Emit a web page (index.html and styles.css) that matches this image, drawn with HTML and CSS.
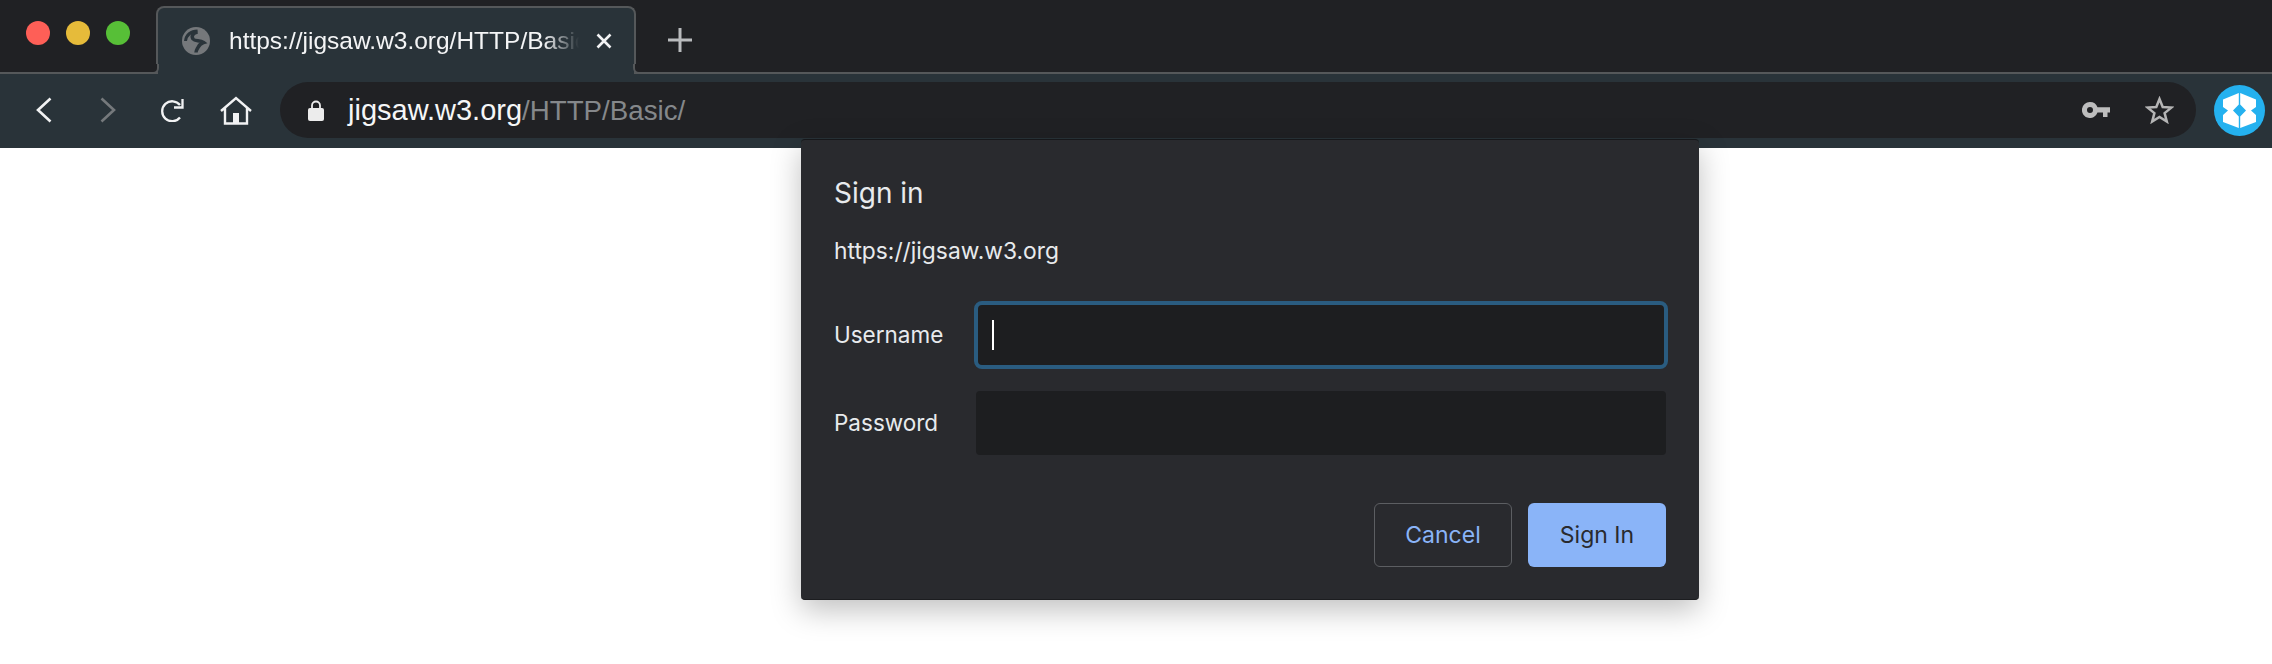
FILE: index.html
```html
<!DOCTYPE html>
<html lang="en">
<head>
    <meta charset="UTF-8">
    <meta name="viewport" content="width=device-width, initial-scale=1.0">
    <title>Sign in</title>
    <link rel="stylesheet" href="styles.css">
</head>
<body>

    <div class="tab-strip">
        <div class="traffic-lights">
            <span class="light red"></span>
            <span class="light yellow"></span>
            <span class="light green"></span>
        </div>
        <div class="tab">
            <svg class="tab-globe" viewBox="0 0 28 28">
                <circle cx="14" cy="14" r="14" fill="#75787b"/>
                <path d="M3.500 14C4 8 9 4 15.500 4" stroke="#2a343a" stroke-width="3" fill="none"/>
                <path d="M15.500 5C11 6 9 9 11 12c2 2.500 7 1 10.500 3.500-3.500 1-4.500 3-5.500 5-1 2-2 3-2 5" stroke="#2a343a" stroke-width="3.500" fill="none"/>
            </svg>
            <span class="tab-title">https://jigsaw.w3.org/HTTP/Basic/</span>
            <svg class="tab-close" viewBox="0 0 16 16">
                <path d="M1.500 1.500l13 13M14.500 1.500l-13 13" stroke="#f2f3f4" stroke-width="2.600" fill="none"/>
            </svg>
        </div>
        <svg class="new-tab" viewBox="0 0 24 24">
            <path d="M12 0v24M0 12h24" stroke="#b9bbbd" stroke-width="3" fill="none"/>
        </svg>
    </div>

    <div class="toolbar">
        <svg class="nav-icon back" viewBox="0 0 16 26">
            <path d="M14.500 1.500L2 13l12.500 11.500" stroke="#f1f2f3" stroke-width="2.600" fill="none"/>
        </svg>
        <svg class="nav-icon forward" viewBox="0 0 16 26">
            <path d="M1.500 1.500L14 13 1.500 24.500" stroke="#75797c" stroke-width="2.600" fill="none"/>
        </svg>
        <svg class="nav-icon reload" viewBox="0 0 23 24">
            <path d="M19 19.500A10 10 0 1 1 19 7" stroke="#f1f2f3" stroke-width="2.300" fill="none"/>
            <path d="M21.500 1v8.500H13" stroke="#f1f2f3" stroke-width="2.300" fill="none"/>
        </svg>
        <svg class="nav-icon home" viewBox="0 0 32 29">
            <path d="M1 15L16 2l15 13M5 12v15.500h22V12" stroke="#f1f2f3" stroke-width="2.400" fill="none"/>
            <rect x="13" y="17" width="6" height="10" fill="#f1f2f3"/>
        </svg>

        <div class="omnibox">
            <svg class="lock" viewBox="0 0 16 21">
                <path d="M4 9V5.500a4 4 0 0 1 8 0V9" stroke="#ececec" stroke-width="1.800" fill="none"/>
                <rect x="0" y="8" width="16" height="13" rx="2" fill="#ececec"/>
            </svg>
            <span class="url"><span class="url-host">jigsaw.w3.org</span><span class="url-path">/HTTP/Basic/</span></span>
            <svg class="key" viewBox="0 0 28 16">
                <path d="M8 0a8 8 0 0 1 7.500 5.200H28v5.300h-2.500v4.500h-4.500v-4.500h-5.500A8 8 0 1 1 8 0zm0 5a3 3 0 1 0 0 6 3 3 0 0 0 0-6z" fill="#bdbdbd" fill-rule="evenodd"/>
            </svg>
            <svg class="star" viewBox="0 0 29 28">
                <path d="M14.500 3l3.200 8 8.600.6-6.700 5.500 2.200 8.400-7.300-4.600-7.300 4.600 2.200-8.400-6.700-5.500 8.600-.6z" stroke="#b5b5b5" stroke-width="2.500" fill="none"/>
            </svg>
        </div>

        <div class="ext-badge">
            <svg viewBox="0 0 51 51">
                <path d="M24.800 8L9 14.500V22l5 3.500L9 30v7l15.800 6V31.500l-5.800-6 5.800-6zM26.200 8L42 14.500V22l-5 3.500 5 4.500v7l-15.800 6V31.500l5.800-6-5.800-6z" fill="#fff"/>
            </svg>
        </div>
    </div>

    <div class="page">
        <div class="dialog">
            <div class="dialog-title">Sign in</div>
            <div class="dialog-origin">https://jigsaw.w3.org</div>
            <div class="field first">
                <label class="field-label">Username</label>
                <div class="field-input focused"><span class="caret"></span></div>
            </div>
            <div class="field">
                <label class="field-label">Password</label>
                <div class="field-input"></div>
            </div>
            <div class="dialog-buttons">
                <button class="btn btn-cancel">Cancel</button>
                <button class="btn btn-signin">Sign In</button>
            </div>
        </div>
    </div>

</body>
</html>
```

FILE: styles.css
```css
* {
    box-sizing: border-box;
}
html, body {
    height: 100%;
}
body {
    margin: 0;
    background-color: #fff;
    font-family: Inter, "Liberation Sans", sans-serif;
    overflow: hidden;
}
svg {
    display: block;
    flex: none;
}

/* tab strip */
.tab-strip {
    height: 74px;
    background-color: #202124;
    border-bottom: 2px solid #55585a;
    display: flex;
    padding-top: 6px;
}
.traffic-lights {
    width: 156px;
    padding: 15px 0 0 26px;
    display: flex;
    gap: 16px;
}
.light {
    width: 24px;
    height: 24px;
    border-radius: 50%;
}
.red { background-color: #fe5f57; }
.yellow { background-color: #e6bb3a; }
.green { background-color: #57bf37; }
.tab {
    width: 480px;
    height: 68px;
    background-color: #293339;
    border: 2px solid #55585a;
    border-bottom: none;
    border-radius: 8px 8px 0 0;
    display: flex;
    align-items: center;
    padding-left: 24px;
    position: relative;
}
.tab::before,
.tab::after {
    content: "";
    position: absolute;
    bottom: 0;
    width: 8px;
    height: 8px;
    background-color: #202124;
    border-bottom: 2px solid #55585a;
}
.tab::before {
    left: -9px;
    border-right: 2px solid #55585a;
    border-bottom-right-radius: 6px;
}
.tab::after {
    right: -9px;
    border-left: 2px solid #55585a;
    border-bottom-left-radius: 6px;
}
.tab-globe {
    width: 28px;
    height: 28px;
}
.tab-title {
    margin-left: 19px;
    width: 350px;
    color: #f4f5f6;
    font-family: "Liberation Sans", sans-serif;
    font-size: 24.500px;
    white-space: nowrap;
    overflow: hidden;
    -webkit-mask-image: linear-gradient(to right, #000 315px, transparent 350px);
    mask-image: linear-gradient(to right, #000 315px, transparent 350px);
}
.tab-close {
    width: 16px;
    height: 16px;
    margin-left: 17px;
}
.new-tab {
    width: 24px;
    height: 24px;
    margin: 22px 0 0 32px;
}

/* toolbar */
.toolbar {
    height: 74px;
    background-color: #293339;
    display: flex;
    align-items: center;
    padding: 0 0 2px 36px;
}
.nav-icon.back {
    width: 16px;
    height: 26px;
}
.nav-icon.forward {
    width: 16px;
    height: 26px;
    margin-left: 48px;
}
.nav-icon.reload {
    width: 23px;
    height: 24px;
    margin-left: 45px;
}
.nav-icon.home {
    width: 32px;
    height: 29px;
    margin-left: 36px;
}
.omnibox {
    width: 1916px;
    height: 56px;
    margin-left: 28px;
    background-color: #202124;
    border-radius: 28px;
    display: flex;
    align-items: center;
    padding-left: 28px;
    flex: none;
}
.lock {
    width: 16px;
    height: 21px;
}
.url {
    margin-left: 24px;
    font-family: "Liberation Sans", sans-serif;
    font-size: 28px;
    flex: 1;
}
.url-host {
    color: #f5f6f7;
    font-size: 29px;
}
.url-path {
    color: #85888b;
    font-size: 27.700px;
}
.key {
    width: 28px;
    height: 16px;
}
.star {
    width: 29px;
    height: 28px;
    margin: 0 22px 0 35px;
}
.ext-badge {
    width: 51px;
    height: 51px;
    margin-left: 18px;
    background-color: #24b1ef;
    border-radius: 50%;
    flex: none;
}

/* auth dialog */
.page {
    padding-left: 801px;
}
.dialog {
    width: 898px;
    height: 461px;
    margin-top: -9px;
    padding: 33px;
    position: relative;
    background-color: #292a2e;
    border-top: 1px solid #16171a;
    border-bottom: 1px solid #1c1d20;
    border-radius: 4px;
    box-shadow: 0 10px 30px rgba(0, 0, 0, 0.25);
}
.dialog-title {
    font-size: 28px;
    line-height: 36px;
    margin-top: 2px;
    color: #e8eaed;
}
.dialog-origin {
    margin-top: 25px;
    font-size: 22.800px;
    line-height: 30px;
    color: #e8eaed;
}
.field {
    display: flex;
    align-items: center;
    height: 64px;
    margin-top: 24px;
}
.field.first {
    margin-top: 37px;
}
.field-label {
    width: 142px;
    padding-bottom: 2px;
    font-size: 22.500px;
    color: #e8eaed;
}
.field-input {
    flex: 1;
    height: 64px;
    background-color: #1d1e20;
    border-radius: 4px;
    display: flex;
    align-items: center;
    padding-left: 16px;
}
.field-input.focused {
    outline: 4px solid #2a5c80;
    outline-offset: -2px;
    border-radius: 6px;
}
.caret {
    width: 2px;
    height: 30px;
    background-color: #fff;
}
.dialog-buttons {
    display: flex;
    justify-content: flex-end;
    gap: 16px;
    margin-top: 48px;
}
.btn {
    width: 138px;
    height: 64px;
    border-radius: 6px;
    font-family: Inter, "Liberation Sans", sans-serif;
    font-size: 23px;
    cursor: pointer;
}
.btn-cancel {
    background-color: transparent;
    border: 1px solid #5c5e62;
    color: #8ab4f8;
}
.btn-signin {
    background-color: #8ab4f8;
    border: none;
    color: #292a2e;
}
```
